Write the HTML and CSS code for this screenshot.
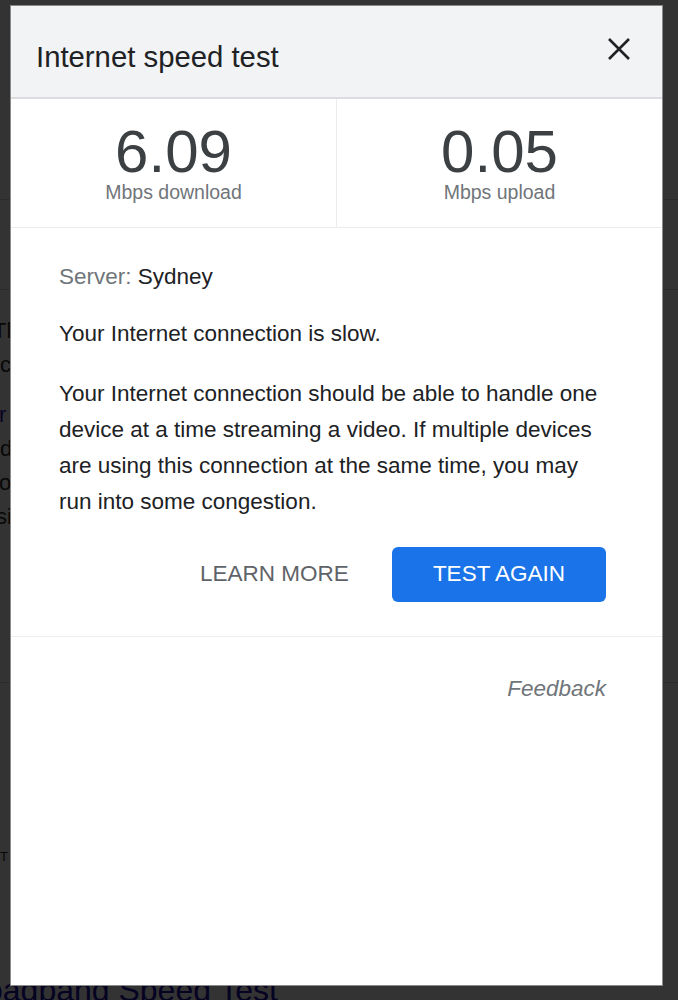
FILE: index.html
```html
<!DOCTYPE html>
<html lang="en">
<head>
<meta charset="utf-8">
<title>Internet speed test</title>
<link rel="stylesheet" href="styles.css">
</head>
<body>
<div class="page">
  <div class="pg-head"></div>
  <div class="pg-nav"></div>
  <div class="pg-block first">
    <p class="pg-line off-th">Th</p>
    <p class="pg-line off-c">c</p>
  </div>
  <div class="pg-block second">
    <p class="pg-line pg-link off-r">r</p>
    <p class="pg-line off-d">d</p>
    <p class="pg-line off-o">o</p>
    <p class="pg-line off-s">si</p>
  </div>
  <div class="pg-rule"></div>
  <p class="pg-small">T</p>
  <h2 class="pg-title">Broadband Speed Test</h2>
</div>

<div class="overlay">
  <div class="dialog">
    <div class="dlg-header">
      <h1 class="dlg-title">Internet speed test</h1>
      <svg class="dlg-close" width="22" height="22" viewBox="0 0 22 22" aria-label="Close">
        <path d="M1 1 L21 21 M21 1 L1 21" stroke="#202124" stroke-width="2.6" fill="none"/>
      </svg>
    </div>
    <div class="stats">
      <div class="stat divided">
        <div class="stat-num">6.09</div>
        <div class="stat-label">Mbps download</div>
      </div>
      <div class="stat">
        <div class="stat-num">0.05</div>
        <div class="stat-label">Mbps upload</div>
      </div>
    </div>
    <div class="dlg-body">
      <p class="server"><span class="muted">Server:</span> Sydney</p>
      <p class="verdict">Your Internet connection is slow.</p>
      <p class="desc">Your Internet connection should be able to handle one device at a time streaming a video. If multiple devices are using this connection at the same time, you may run into some congestion.</p>
      <div class="actions">
        <span class="btn btn-text">LEARN MORE</span>
        <span class="btn btn-primary">TEST AGAIN</span>
      </div>
    </div>
    <div class="dlg-footer">
      <span class="feedback">Feedback</span>
    </div>
  </div>
</div>
</body>
</html>
```

FILE: styles.css
```css
html, body {
  margin: 0;
  padding: 0;
  height: 100%;
  overflow: hidden;
}

body {
  background: #ffffff;
  font-family: "Liberation Sans", Arial, sans-serif;
  color: #202124;
}

/* ---------- page behind the modal ---------- */
.page {
  width: 678px;
}

.pg-head {
  height: 200px;
  border-bottom: 1px solid #d8d8d8;
  box-sizing: border-box;
}

.pg-nav {
  height: 90px;
  border-bottom: 1px solid #d8d8d8;
  box-sizing: border-box;
}

.pg-block {
  margin: 0;
}

.pg-block.first {
  padding-top: 24px;
}

.pg-block.second {
  margin-top: 16px;
}

.pg-line {
  margin: 0;
  font-size: 22px;
  line-height: 34px;
  color: #2a2a2a;
  white-space: nowrap;
}

.pg-link {
  color: #1a0dab;
}

.off-th { margin-left: -7px; }
.off-c { margin-left: 0; }
.off-r { margin-left: -1px; }
.off-d { margin-left: 0; }
.off-o { margin-left: -1px; }
.off-s { margin-left: -4px; }

.pg-rule {
  margin-top: 148px;
  height: 1px;
  background: #d8d8d8;
}

.pg-small {
  margin: 166px 0 0 0;
  font-size: 13px;
  line-height: 16px;
  color: #2a2a2a;
}

.pg-title {
  margin: 105px 0 0 -47px;
  font-size: 32px;
  line-height: 40px;
  font-weight: normal;
  color: #1a0dab;
  white-space: nowrap;
}

/* ---------- modal ---------- */
.overlay {
  position: fixed;
  inset: 0;
  background: rgba(0, 0, 0, 0.8);
  padding: 5px 15px 14px 10px;
  display: flex;
}

.dialog {
  flex: 1;
  background: #ffffff;
  border: 1px solid #8a8a8a;
  display: flex;
  flex-direction: column;
  overflow: hidden;
}

.dlg-header {
  height: 93px;
  box-sizing: border-box;
  background: #f1f3f4;
  border-bottom: 2px solid #dadce0;
  display: flex;
  align-items: flex-start;
  padding: 0 32px 0 25px;
}

.dlg-title {
  flex: 1;
  margin: 34px 0 0 0;
  font-size: 29.3px;
  line-height: 34px;
  font-weight: normal;
  color: #202124;
}

.dlg-close {
  margin-top: 32px;
  flex: none;
}

.stats {
  display: flex;
  height: 129px;
  box-sizing: border-box;
  border-bottom: 1px solid #ececec;
}

.stat {
  flex: 1;
  text-align: center;
  padding-top: 25px;
}

.stat.divided {
  border-right: 1px solid #ececec;
}

.stat-num {
  font-size: 60px;
  line-height: 56px;
  color: #3c4043;
}

.stat-label {
  font-size: 19.5px;
  line-height: 24px;
  color: #70757a;
}

.dlg-body {
  padding: 31px 56px 34px 48px;
  border-bottom: 1px solid #eeeeee;
}

.server,
.verdict,
.desc {
  margin: 0;
  font-size: 22.5px;
  line-height: 36px;
  color: #202124;
}

.server {
  margin-bottom: 21px;
}

.verdict {
  margin-bottom: 24px;
}

.desc {
  margin-right: -8px;
}

.muted {
  color: #70757a;
}

.actions {
  margin-top: 27px;
  display: flex;
  justify-content: flex-end;
  align-items: center;
  gap: 3px;
}

.btn {
  height: 55px;
  padding: 0 40px;
  display: flex;
  align-items: center;
  font-size: 22.5px;
  line-height: 1;
  text-transform: uppercase;
  white-space: nowrap;
}

.btn-text {
  color: #5f6368;
}

.btn-primary {
  padding: 0 41px;
  background: #1a73e8;
  color: #ffffff;
  border-radius: 6px;
}

.dlg-footer {
  padding: 34px 56px 0 48px;
  display: flex;
  justify-content: flex-end;
}

.feedback {
  font-size: 22.5px;
  line-height: 36px;
  font-style: italic;
  color: #70757a;
}
```
